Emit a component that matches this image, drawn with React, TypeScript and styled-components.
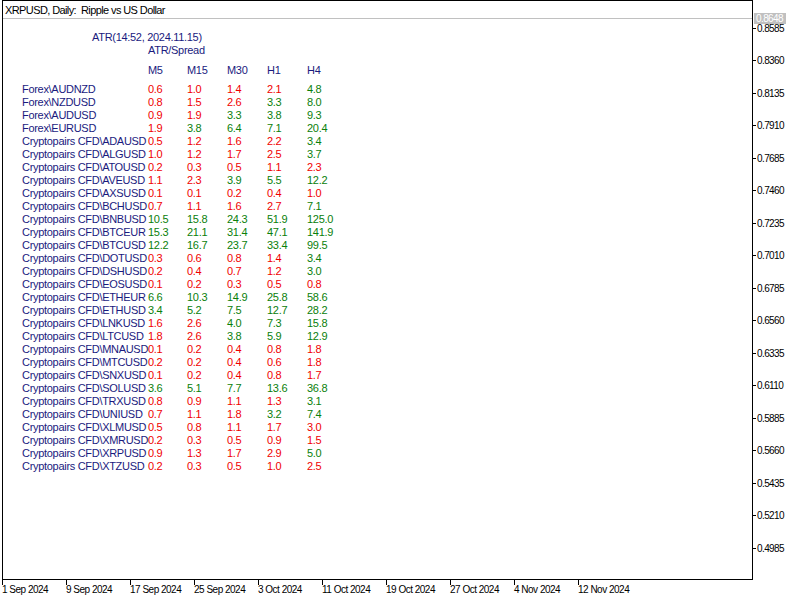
import React from 'react';
import styled, { createGlobalStyle } from 'styled-components';

const GlobalStyle = createGlobalStyle`
  html, body { margin: 0; padding: 0; background: #ffffff; }
  body { font-family: "Liberation Sans", Arial, sans-serif; overflow: hidden; }
`;

const NAVY = '#1a1a7e';
const RED = '#f00000';
const GREEN = '#0a800a';

const Page = styled.div`
  display: grid;
  grid-template-columns: 751px 47px;
  grid-template-rows: 580px 20px;
  width: 798px;
  height: 600px;
  padding-left: 2px;
`;

const Chart = styled.div`
  box-sizing: border-box;
  border: 1px solid #000;
  display: flex;
  flex-direction: column;
  overflow: hidden;
`;

const TitleBar = styled.div`
  box-sizing: border-box;
  height: 18px;
  border-bottom: 1px solid #c0c0c0;
  padding: 3px 0 0 2px;
  font-size: 11px;
  line-height: 13px;
  letter-spacing: -0.6px;
  color: #000;
  white-space: pre;
`;

const Table = styled.div`
  margin: 12px 0 0 19px;
  font-size: 11px;
  line-height: 13px;
  letter-spacing: -0.3px;
  color: ${NAVY};
`;

const Caption = styled.div<{ $indent: number; $gap?: number }>`
  height: 13px;
  padding-left: ${(p) => p.$indent}px;
  margin-top: ${(p) => p.$gap ?? 0}px;
  white-space: nowrap;
`;

const Row = styled.div<{ $gap?: number }>`
  display: grid;
  grid-template-columns: 126px 39px 40px 40px 40px 40px;
  height: 13px;
  margin-top: ${(p) => p.$gap ?? 0}px;
  white-space: nowrap;
`;

const Name = styled.span`
  color: ${NAVY};
`;

const Value = styled.span<{ $up: boolean }>`
  color: ${(p) => (p.$up ? GREEN : RED)};
`;

const PriceAxis = styled.div`
  position: relative;
  display: flex;
  flex-direction: column;
  gap: 19.5px;
  padding-top: 21.5px;
  font-size: 10px;
  letter-spacing: -0.6px;
  color: #000;
`;

const AxisLabel = styled.div`
  display: flex;
  align-items: center;
  gap: 1px;
  height: 13px;
  line-height: 13px;
`;

const TickH = styled.span`
  width: 3px;
  height: 1px;
  background: #000;
`;

const PriceBadge = styled.div`
  position: absolute;
  top: 13px;
  left: 1px;
  width: 30px;
  height: 11px;
  padding-left: 2px;
  background: #c0c0c0;
  color: #fff;
  font-size: 10px;
  line-height: 11px;
`;

const TimeAxis = styled.div`
  grid-column: 1 / span 2;
  display: flex;
  font-size: 10px;
  letter-spacing: -0.5px;
  color: #000;
`;

const TimeItem = styled.div`
  width: 64px;
  flex: none;
  display: flex;
  flex-direction: column;
`;

const TickV = styled.span`
  width: 1px;
  height: 5px;
  background: #000;
`;

const TimeText = styled.span`
  line-height: 11px;
  margin-top: -1px;
  white-space: nowrap;
`;

type R = [string, [string, number][]];
const g = 1;
const r = 0;
const rows: R[] = [
  ['Forex\\AUDNZD', [['0.6', r], ['1.0', r], ['1.4', r], ['2.1', r], ['4.8', g]]],
  ['Forex\\NZDUSD', [['0.8', r], ['1.5', r], ['2.6', r], ['3.3', g], ['8.0', g]]],
  ['Forex\\AUDUSD', [['0.9', r], ['1.9', r], ['3.3', g], ['3.8', g], ['9.3', g]]],
  ['Forex\\EURUSD', [['1.9', r], ['3.8', g], ['6.4', g], ['7.1', g], ['20.4', g]]],
  ['Cryptopairs CFD\\ADAUSD', [['0.5', r], ['1.2', r], ['1.6', r], ['2.2', r], ['3.4', g]]],
  ['Cryptopairs CFD\\ALGUSD', [['1.0', r], ['1.2', r], ['1.7', r], ['2.5', r], ['3.7', g]]],
  ['Cryptopairs CFD\\ATOUSD', [['0.2', r], ['0.3', r], ['0.5', r], ['1.1', r], ['2.3', r]]],
  ['Cryptopairs CFD\\AVEUSD', [['1.1', r], ['2.3', r], ['3.9', g], ['5.5', g], ['12.2', g]]],
  ['Cryptopairs CFD\\AXSUSD', [['0.1', r], ['0.1', r], ['0.2', r], ['0.4', r], ['1.0', r]]],
  ['Cryptopairs CFD\\BCHUSD', [['0.7', r], ['1.1', r], ['1.6', r], ['2.7', r], ['7.1', g]]],
  ['Cryptopairs CFD\\BNBUSD', [['10.5', g], ['15.8', g], ['24.3', g], ['51.9', g], ['125.0', g]]],
  ['Cryptopairs CFD\\BTCEUR', [['15.3', g], ['21.1', g], ['31.4', g], ['47.1', g], ['141.9', g]]],
  ['Cryptopairs CFD\\BTCUSD', [['12.2', g], ['16.7', g], ['23.7', g], ['33.4', g], ['99.5', g]]],
  ['Cryptopairs CFD\\DOTUSD', [['0.3', r], ['0.6', r], ['0.8', r], ['1.4', r], ['3.4', g]]],
  ['Cryptopairs CFD\\DSHUSD', [['0.2', r], ['0.4', r], ['0.7', r], ['1.2', r], ['3.0', g]]],
  ['Cryptopairs CFD\\EOSUSD', [['0.1', r], ['0.2', r], ['0.3', r], ['0.5', r], ['0.8', r]]],
  ['Cryptopairs CFD\\ETHEUR', [['6.6', g], ['10.3', g], ['14.9', g], ['25.8', g], ['58.6', g]]],
  ['Cryptopairs CFD\\ETHUSD', [['3.4', g], ['5.2', g], ['7.5', g], ['12.7', g], ['28.2', g]]],
  ['Cryptopairs CFD\\LNKUSD', [['1.6', r], ['2.6', r], ['4.0', g], ['7.3', g], ['15.8', g]]],
  ['Cryptopairs CFD\\LTCUSD', [['1.8', r], ['2.6', r], ['3.8', g], ['5.9', g], ['12.9', g]]],
  ['Cryptopairs CFD\\MNAUSD', [['0.1', r], ['0.2', r], ['0.4', r], ['0.8', r], ['1.8', r]]],
  ['Cryptopairs CFD\\MTCUSD', [['0.2', r], ['0.2', r], ['0.4', r], ['0.6', r], ['1.8', r]]],
  ['Cryptopairs CFD\\SNXUSD', [['0.1', r], ['0.2', r], ['0.4', r], ['0.8', r], ['1.7', r]]],
  ['Cryptopairs CFD\\SOLUSD', [['3.6', g], ['5.1', g], ['7.7', g], ['13.6', g], ['36.8', g]]],
  ['Cryptopairs CFD\\TRXUSD', [['0.8', r], ['0.9', r], ['1.1', r], ['1.3', r], ['3.1', g]]],
  ['Cryptopairs CFD\\UNIUSD', [['0.7', r], ['1.1', r], ['1.8', r], ['3.2', g], ['7.4', g]]],
  ['Cryptopairs CFD\\XLMUSD', [['0.5', r], ['0.8', r], ['1.1', r], ['1.7', r], ['3.0', r]]],
  ['Cryptopairs CFD\\XMRUSD', [['0.2', r], ['0.3', r], ['0.5', r], ['0.9', r], ['1.5', r]]],
  ['Cryptopairs CFD\\XRPUSD', [['0.9', r], ['1.3', r], ['1.7', r], ['2.9', r], ['5.0', g]]],
  ['Cryptopairs CFD\\XTZUSD', [['0.2', r], ['0.3', r], ['0.5', r], ['1.0', r], ['2.5', r]]],
];

const prices = [
  '0.8585', '0.8360', '0.8135', '0.7910', '0.7685', '0.7460', '0.7235', '0.7010', '0.6785',
  '0.6560', '0.6335', '0.6110', '0.5885', '0.5660', '0.5435', '0.5210', '0.4985',
];

const dates = [
  '1 Sep 2024', '9 Sep 2024', '17 Sep 2024', '25 Sep 2024', '3 Oct 2024', '11 Oct 2024',
  '19 Oct 2024', '27 Oct 2024', '4 Nov 2024', '12 Nov 2024',
];

export default function App() {
  return (
    <>
      <GlobalStyle />
      <Page>
        <Chart>
          <TitleBar>{'XRPUSD, Daily:  Ripple vs US Dollar'}</TitleBar>
          <Table>
            <Caption $indent={70}>ATR(14:52, 2024.11.15)</Caption>
            <Caption $indent={126}>ATR/Spread</Caption>
            <Row $gap={7}>
              <span />
              <span>M5</span>
              <span>M15</span>
              <span>M30</span>
              <span>H1</span>
              <span>H4</span>
            </Row>
            {rows.map(([name, vals], i) => (
              <Row key={name} $gap={i === 0 ? 6 : 0}>
                <Name>{name}</Name>
                {vals.map(([v, up], j) => (
                  <Value key={j} $up={up === 1}>{v}</Value>
                ))}
              </Row>
            ))}
          </Table>
        </Chart>
        <PriceAxis>
          {prices.map((p) => (
            <AxisLabel key={p}>
              <TickH />
              <span>{p}</span>
            </AxisLabel>
          ))}
          <PriceBadge>0.8648</PriceBadge>
        </PriceAxis>
        <TimeAxis>
          {dates.map((d) => (
            <TimeItem key={d}>
              <TickV />
              <TimeText>{d}</TimeText>
            </TimeItem>
          ))}
        </TimeAxis>
      </Page>
    </>
  );
}
